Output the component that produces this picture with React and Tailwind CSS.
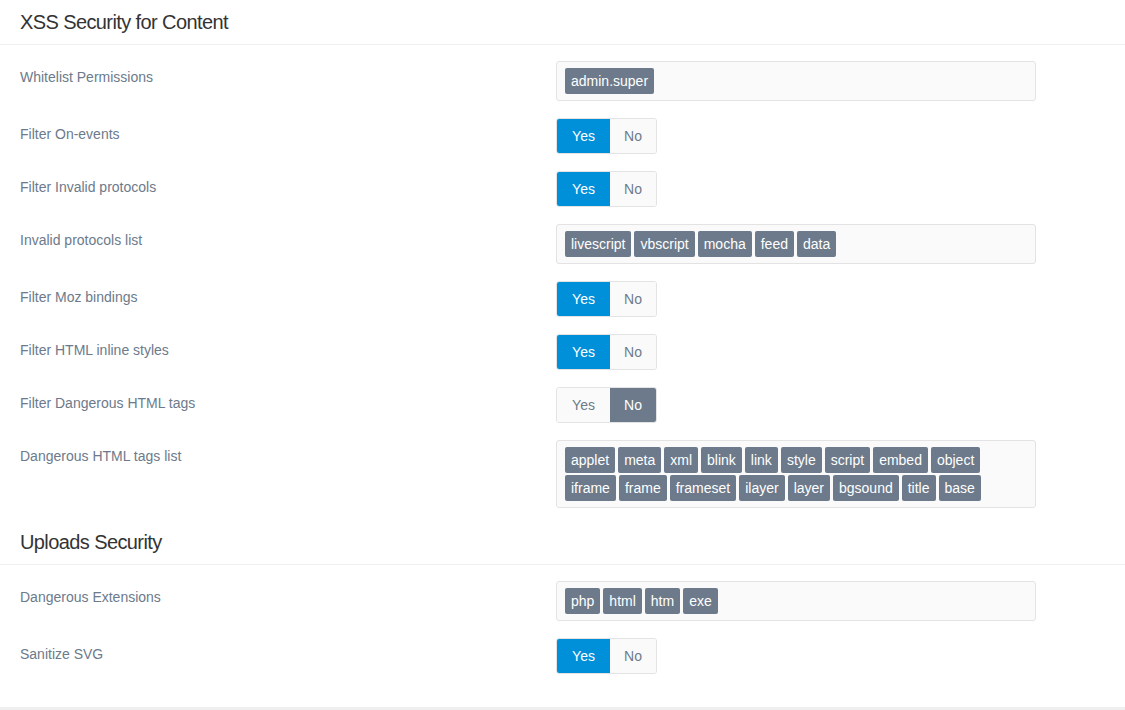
import React, { useState } from 'react';

const xssRows = [
  { label: 'Whitelist Permissions', type: 'tags', value: ['admin.super'] },
  { label: 'Filter On-events', type: 'toggle', value: true },
  { label: 'Filter Invalid protocols', type: 'toggle', value: true },
  { label: 'Invalid protocols list', type: 'tags', value: ['livescript', 'vbscript', 'mocha', 'feed', 'data'] },
  { label: 'Filter Moz bindings', type: 'toggle', value: true },
  { label: 'Filter HTML inline styles', type: 'toggle', value: true },
  { label: 'Filter Dangerous HTML tags', type: 'toggle', value: false },
  {
    label: 'Dangerous HTML tags list',
    type: 'tags',
    value: [
      'applet', 'meta', 'xml', 'blink', 'link', 'style', 'script', 'embed', 'object',
      'iframe', 'frame', 'frameset', 'ilayer', 'layer', 'bgsound', 'title', 'base',
    ],
  },
];

const uploadRows = [
  { label: 'Dangerous Extensions', type: 'tags', value: ['php', 'html', 'htm', 'exe'] },
  { label: 'Sanitize SVG', type: 'toggle', value: true },
];

const Toggle = ({ initial }) => {
  const [on, setOn] = useState(initial);
  return (
    <div className="flex w-[101px] h-[36px] rounded-[3px] border border-[#e3e3e3] overflow-hidden text-[14px]">
      <button
        onClick={() => setOn(true)}
        className={`w-[53px] ${on ? 'bg-[#0090d9] text-white' : 'bg-[#fafafa] text-[#6c7a8b]'}`}
      >
        Yes
      </button>
      <button
        onClick={() => setOn(false)}
        className={`flex-1 ${!on ? 'bg-[#6c7a8b] text-white' : 'bg-[#fafafa] text-[#6c7a8b]'}`}
      >
        No
      </button>
    </div>
  );
};

const TagBox = ({ tags }) => (
  <div className="w-[480px] min-h-[40px] rounded-[3px] border border-[#e3e3e3] bg-[#fafafa] px-[8px] py-[6px] flex flex-wrap gap-x-[3px] gap-y-[2px]">
    {tags.map((tag) => (
      <span
        key={tag}
        className="h-[26px] leading-[26px] px-[6px] rounded-[2px] bg-[#6c7a8b] text-white text-[14px]"
      >
        {tag}
      </span>
    ))}
  </div>
);

const Section = ({ title, rows, bottom }) => (
  <div>
    <div className="h-[45px] px-[20px] flex items-center border-b border-[#f0f0f0]">
      <h2 className="text-[20px] text-[#333] tracking-[-0.6px]">{title}</h2>
    </div>
    <div className={`pt-[16px] ${bottom} flex flex-col gap-[17px]`}>
      {rows.map((row) => (
        <div key={row.label} className="flex">
          <label className="w-[556px] pl-[20px] pt-[6px] leading-[20px] text-[14px] text-[#6c7a8b]">
            {row.label}
          </label>
          {row.type === 'tags' ? <TagBox tags={row.value} /> : <Toggle initial={row.value} />}
        </div>
      ))}
    </div>
  </div>
);

const App = () => (
  <div className="w-[1125px] h-[710px] bg-white overflow-hidden" style={{ fontFamily: '"Liberation Sans", Arial, sans-serif' }}>
    <Section title="XSS Security for Content" rows={xssRows} bottom="pb-[12px]" />
    <Section title="Uploads Security" rows={uploadRows} bottom="pb-[33px]" />
    <div className="h-[3px] bg-[#efefef]" />
  </div>
);

export default App;
